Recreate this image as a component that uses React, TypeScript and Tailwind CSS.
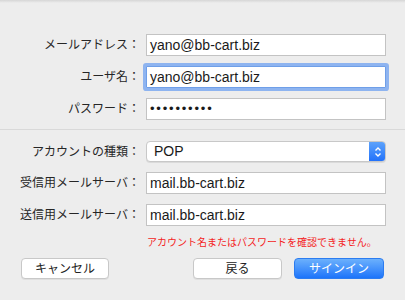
import React from 'react';

const jp = "font-['Helvetica','Liberation_Sans','Noto_Sans_CJK_JP',sans-serif]";

const Label = ({ children }: { children: React.ReactNode }) => (
  <span className="text-right text-[12px] leading-none text-[#262626] whitespace-nowrap">{children}</span>
);

const Field = ({ value, focused, dots }: { value: string; focused?: boolean; dots?: boolean }) => (
  <div
    className={
      'h-[22px] bg-white flex items-center px-[3px] text-[#1a1a1a] ' +
      (dots ? 'text-[13px] tracking-[1.8px] ' : 'text-[14px] ') +
      (focused
        ? 'border border-[#6f9fe8] shadow-[0_0_0_3px_rgba(110,160,240,0.75)] rounded-[1px]'
        : 'border border-[#c3c3c3]')
    }
  >
    {value}
  </div>
);

const App = () => {
  return (
    <div className={`w-[405px] h-[300px] bg-[#ededed] relative overflow-hidden ${jp}`}>
      {/* top shadow */}
      <div className="absolute inset-x-0 top-0 h-[3px] bg-gradient-to-b from-[#d6d6d6] to-transparent" />

      <div className="pt-[34px] pl-[20px] grid grid-cols-[120px_240px] gap-x-[6px] gap-y-[10px] items-center">
        <Label>メールアドレス：</Label>
        <Field value="yano@bb-cart.biz" />
        <Label>ユーザ名：</Label>
        <Field value="yano@bb-cart.biz" focused />
        <Label>パスワード：</Label>
        <Field value="••••••••••" dots />
      </div>

      {/* divider */}
      <div className="mt-[9px] h-px bg-[#d9d9d9]" />

      <div className="pt-[11px] pl-[20px] grid grid-cols-[120px_240px] gap-x-[6px] gap-y-[10px] items-center">
        <Label>アカウントの種類：</Label>
        <div className="h-[21px] flex rounded-[4px] border border-[#c8c8c8] bg-white overflow-hidden shadow-[0_1px_0_rgba(0,0,0,0.08)]">
          <span className="flex-1 flex items-center pl-[7px] text-[14px] text-[#1a1a1a]">POP</span>
          <span className="w-[17px] flex items-center justify-center bg-gradient-to-b from-[#5fa4fb] to-[#1f6ffa] -my-px -mr-px rounded-r-[4px]">
            <svg width="8" height="12" viewBox="0 0 8 12" fill="none" stroke="white" strokeWidth="1.4">
              <path d="M1.5 4.5 L4 2 L6.5 4.5" />
              <path d="M1.5 7.5 L4 10 L6.5 7.5" />
            </svg>
          </span>
        </div>
        <Label>受信用メールサーバ：</Label>
        <Field value="mail.bb-cart.biz" />
        <Label>送信用メールサーバ：</Label>
        <Field value="mail.bb-cart.biz" />
      </div>

      <div className="mt-[12px] pl-[147px] text-[10px] leading-none text-[#f41d1d]">
        アカウント名またはパスワードを確認できません。
      </div>

      <div className="mt-[10px] flex px-[21px] gap-[12px]">
        <button className="w-[88px] h-[21px] rounded-[4px] bg-white border border-[#c8c8c8] shadow-[0_1px_0_rgba(0,0,0,0.06)] text-[12px] text-[#222]">
          キャンセル
        </button>
        <button className="ml-auto w-[89px] h-[21px] rounded-[4px] bg-white border border-[#c8c8c8] shadow-[0_1px_0_rgba(0,0,0,0.06)] text-[12px] text-[#222]">
          戻る
        </button>
        <button className="w-[90px] h-[21px] rounded-[4px] bg-gradient-to-b from-[#6bb0fc] to-[#1b73fa] border border-[#2c7cf0] text-[12px] text-white">
          サインイン
        </button>
      </div>
    </div>
  );
};

export default App;
